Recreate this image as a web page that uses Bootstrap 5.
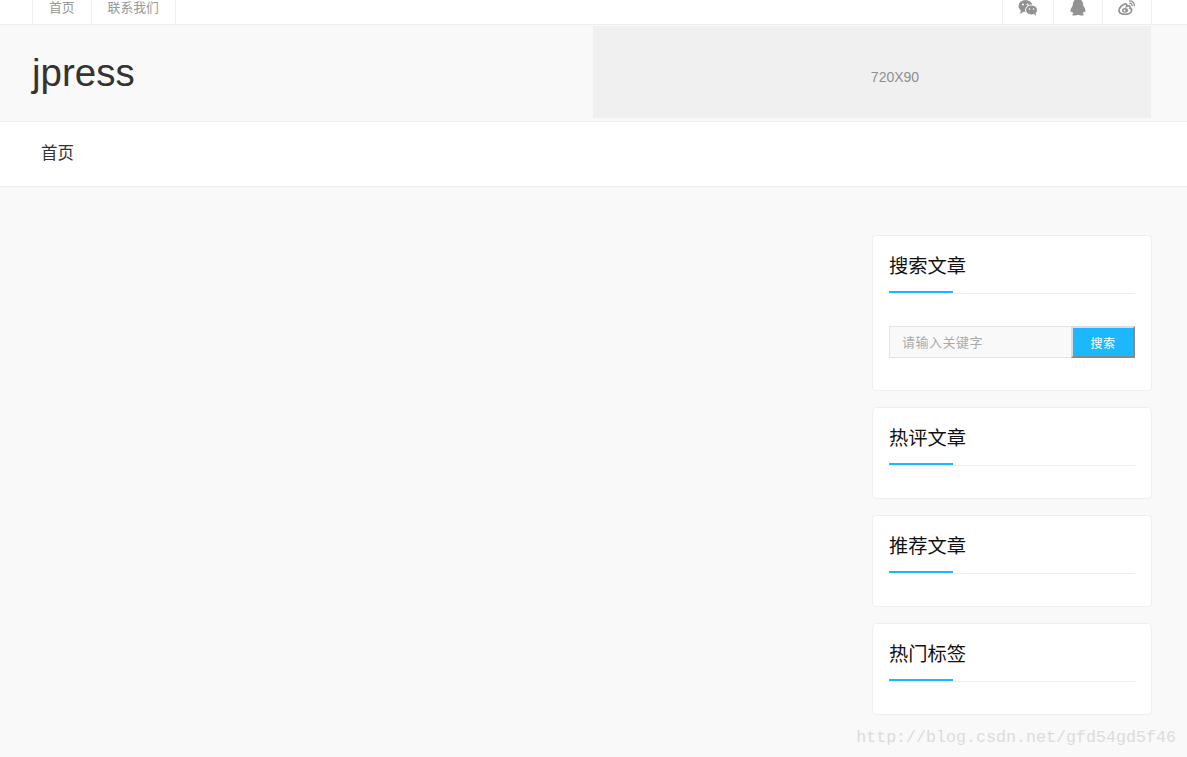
<!DOCTYPE html>
<html lang="zh">
<head>
<meta charset="utf-8">
<title>jpress</title>
<link href="https://cdn.jsdelivr.net/npm/bootstrap@5.3.0/dist/css/bootstrap.min.css" rel="stylesheet">
<style>
html,body{height:757px;overflow:hidden}
body{background:#f9f9f9;font-family:"Liberation Sans","Noto Sans CJK SC",sans-serif;color:#333}
.topstrip{height:25px;background:#fff;border-bottom:1px solid #eee;padding:0 35px 0 32px}
.toplink{height:24px;padding:0 16px;border-left:1px solid #eee;font-size:12.8px;line-height:16px;color:#999;text-decoration:none;display:block}
.toplink.lastcell{border-right:1px solid #eee}
.topicon{width:49px;height:24px;border-left:1px solid #eee;display:flex;justify-content:center}
.topicon.wide{width:51px}
.topicon.lastcell{width:50px;border-right:1px solid #eee}
.topicon svg{display:block}
.masthead{height:97px;background:#f9f9f9;border-bottom:1px solid #eee;padding:1px 36px 0 32px}
.brandname{font-size:38.5px;line-height:44px;color:#333;margin:0;padding-top:25px;font-weight:400}
.adslot{width:558px;height:92px;background:#f0f0f0;color:#8f8f8f;font-size:14px;padding:41px 0 0 46px;text-align:center}
.mainnav{height:65px;background:#fff;border-bottom:1px solid #eee;padding:0 32px}
.mainlink{font-size:16.5px;color:#333;text-decoration:none;padding:0 9px;line-height:63px;display:block}
.sidecol{width:280px;margin:48px 35px 0 0;gap:16px}
.widget{background:#fff;border:1px solid #eee;border-radius:4px;padding:0 16px;height:92px}
.widget.tall{height:156px}
.widget h2{font-size:19.25px;font-weight:400;color:#111;line-height:28px;margin:0;padding:17px 0 0;height:58px;border-bottom:1px solid #eee;position:relative}
.widget h2::after{content:"";position:absolute;left:0;bottom:0;width:64px;height:2px;background:#1cb7fd}
.searchrow{margin-top:32px;height:32px}
.searchbox{flex:1;min-width:0;height:32px;background:#f9f9f9;border:1px solid #e5e5e5;border-right:0;padding:0 12px;font-size:13px;letter-spacing:.5px;color:#333;border-radius:0;outline:0}
.searchbox::placeholder{color:#aaa;opacity:1}
.searchbtn{width:64px;height:32px;background:#1cb7fd;color:#fff;font-size:12px;letter-spacing:.5px;padding:3px 0 0;border:2px solid;border-color:#ddd #888 #888 #ddd;border-radius:0}
.watermark{position:absolute;right:11px;top:726px;font-family:"Liberation Mono","DejaVu Sans Mono",monospace;font-size:16.67px;line-height:24px;color:#dcdcd8}
</style>
</head>
<body>
<div class="topstrip d-flex justify-content-between">
  <div class="d-flex">
    <a class="toplink" href="#">首页</a>
    <a class="toplink lastcell" href="#">联系我们</a>
  </div>
  <div class="d-flex">
    <div class="topicon wide"><svg width="20" height="16" viewBox="0 0 20 16" fill="#929292"><ellipse cx="7.500" cy="6" rx="7" ry="6"/><path d="M3 10l-1 4 4-2.500z"/><ellipse cx="13.500" cy="10" rx="6" ry="5" stroke="#fff" stroke-width="1"/><path d="M16 14l2 2-.5-3.500z"/><circle cx="5" cy="4.500" r="1" fill="#fff"/><circle cx="9.500" cy="4.500" r="1" fill="#fff"/><circle cx="11.500" cy="9" r=".8" fill="#fff"/><circle cx="15.500" cy="9" r=".8" fill="#fff"/></svg></div>
    <div class="topicon"><svg width="18" height="16" viewBox="0 0 18 16" fill="#929292"><path d="M9 -1c3.600 0 5.200 2.800 5.200 6 0 .6.200 1 .6 1.600 1 1.500 2 3.300 1.600 5.200-.2.900-.8.600-1.400-.5-.3 1.100-.8 1.900-1.500 2.500.9.300 1.500.7 1.300 1.200-.2.600-2.600.7-4.100.2-.5-.2-1.100-.3-1.700-.3s-1.200.1-1.700.3c-1.500.5-3.900.4-4.100-.2-.2-.5.400-.9 1.300-1.200-.7-.6-1.200-1.400-1.500-2.500-.6 1.100-1.200 1.400-1.400.5-.4-1.900.6-3.700 1.600-5.200.4-.6.600-1 .6-1.600C3.800 1.800 5.400-1 9-1z"/></svg></div>
    <div class="topicon lastcell"><svg width="18" height="15" viewBox="0 0 18 15" fill="none" stroke="#929292"><path d="M7.500 14.300C3.800 14.300 1 12.700 1 10.200 1 7.800 4.800 3.800 7.500 3.800c1.500 0 1.400 1.500 1 2.700 1.800-.9 3.700-.9 3.700.8 0 .3 0 .5-.2.800 1.200.4 1.700 1 1.700 2 0 2.400-2.700 4.200-6.200 4.200z" stroke-width="1.700"/><ellipse cx="7" cy="10.300" rx="3" ry="2.400" fill="#929292" stroke="none"/><circle cx="6.500" cy="10.500" r=".9" fill="#fff" stroke="none"/><path d="M11 1.100c3-.7 6 1.900 5.300 5.300M11.400 3.300c1.700-.4 3.100 1.100 2.700 2.800" stroke-width="1.300"/></svg></div>
  </div>
</div>
<header class="masthead d-flex justify-content-between">
  <h1 class="brandname">jpress</h1>
  <div class="adslot">720X90</div>
</header>
<nav class="mainnav"><a class="mainlink d-inline-block" href="#">首页</a></nav>
<div class="d-flex justify-content-end">
  <aside class="sidecol d-flex flex-column">
    <section class="widget tall">
      <h2>搜索文章</h2>
      <form class="searchrow d-flex">
        <input class="searchbox" type="text" placeholder="请输入关键字">
        <button class="searchbtn" type="button">搜索</button>
      </form>
    </section>
    <section class="widget"><h2>热评文章</h2></section>
    <section class="widget"><h2>推荐文章</h2></section>
    <section class="widget"><h2>热门标签</h2></section>
  </aside>
</div>
<div class="watermark">http://blog.csdn.net/gfd54gd5f46</div>
<script src="https://cdn.jsdelivr.net/npm/bootstrap@5.3.0/dist/js/bootstrap.bundle.min.js"></script>
</body>
</html>
